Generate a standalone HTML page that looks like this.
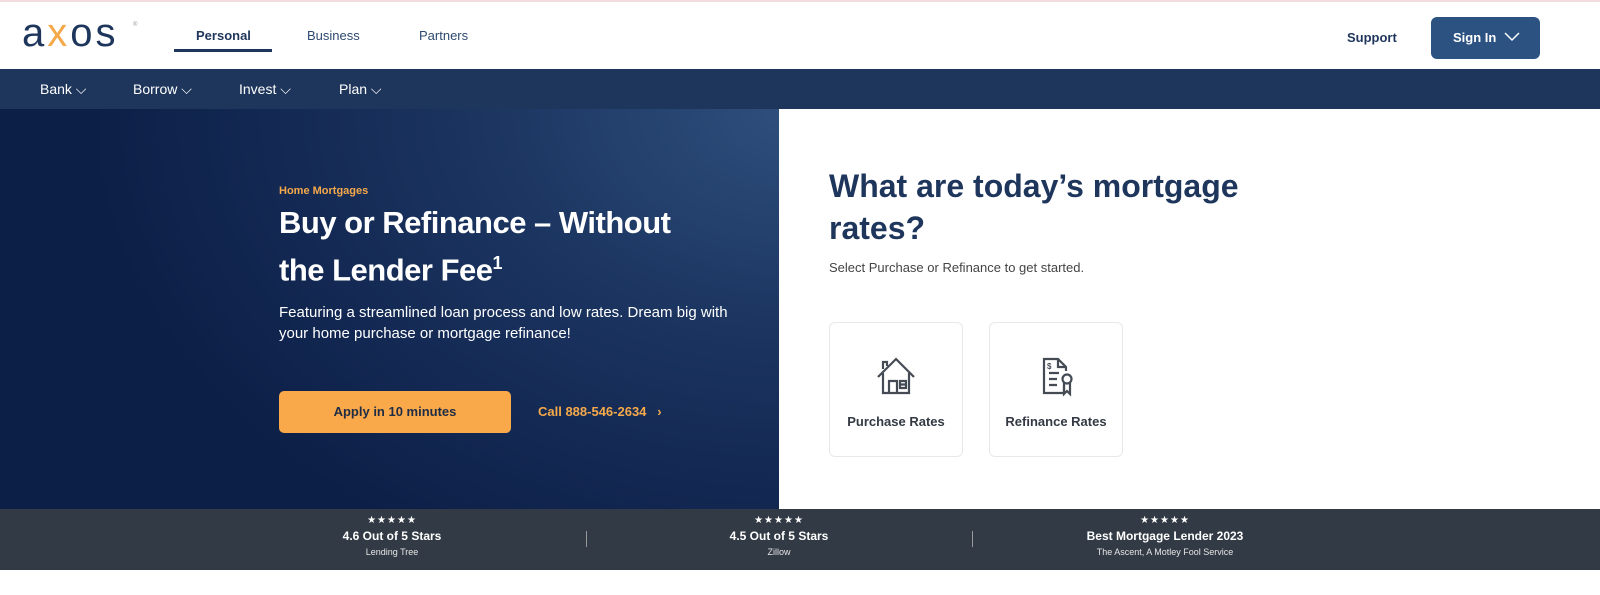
<!DOCTYPE html>
<html><head><style>
*{margin:0;padding:0;box-sizing:border-box}
body{width:1600px;height:595px;overflow:hidden;background:#fff;font-family:"Liberation Sans",sans-serif;position:relative}
.abs{position:absolute}
.top{position:absolute;top:0;left:0;width:1600px;height:2px;background:#f3dde0}
.nav2{position:absolute;top:69px;left:0;width:1600px;height:40px;background:#1f365c;color:#fff;font-size:14px}
.nav2 span{position:absolute;top:12px}
.hero{position:absolute;top:109px;left:0;width:779px;height:400px;background:radial-gradient(ellipse 700px 500px at 790px 0px,#2f4f7c 0%,#1b3460 45%,#0c1f47 100%)}
.band{position:absolute;top:509px;left:0;width:1600px;height:61px;background:#323b45;color:#fff;text-align:center}
.col{position:absolute;top:6px;width:300px}
.col .s{font-size:10px;letter-spacing:1px}
.col .t{font-size:12px;font-weight:bold;margin-top:3px}
.col .u{font-size:9px;margin-top:4px;color:#e6e6e6}
.card{position:absolute;top:322px;width:134px;height:135px;border:1px solid #e6e8eb;border-radius:6px;text-align:center;font-size:13px;font-weight:bold;color:#333a44}
</style></head><body>
<div class="top"></div>
<div class="abs" style="left:22px;top:13px;font-size:40px;color:#1f365c;letter-spacing:3px;line-height:40px">a<span style="color:#f5a94a">x</span>os</div>
<div class="abs" style="left:133px;top:22px;font-size:6px;color:#999">®</div>
<div class="abs" style="left:196px;top:28px;font-size:13px;font-weight:bold;color:#1f365c">Personal</div>
<div class="abs" style="left:174px;top:49px;width:98px;height:3px;background:#1f365c"></div>
<div class="abs" style="left:307px;top:28px;font-size:13px;color:#2d4a70">Business</div>
<div class="abs" style="left:419px;top:28px;font-size:13px;color:#2d4a70">Partners</div>
<div class="abs" style="left:1347px;top:30px;font-size:13px;font-weight:bold;color:#1f365c">Support</div>
<div class="abs" style="left:1431px;top:17px;width:109px;height:42px;background:#2c5282;border-radius:6px;color:#fff;font-size:13px;font-weight:bold;padding:13px 0 0 22px">Sign In <svg width="16" height="10" style="margin-left:4px" viewBox="0 0 16 10"><path d="M1 1l7 7 7-7" stroke="#fff" stroke-width="1.5" fill="none"/></svg></div>
<div class="nav2">
<span style="left:40px">Bank ⌵</span><span style="left:133px">Borrow ⌵</span><span style="left:239px">Invest ⌵</span><span style="left:339px">Plan ⌵</span>
</div>
<div class="hero">
<div class="abs" style="left:279px;top:76px;font-size:11px;font-weight:bold;color:#f5a94a">Home Mortgages</div>
<div class="abs" style="left:279px;top:94px;font-size:31px;font-weight:bold;color:#fff;line-height:40px;width:440px;letter-spacing:-0.5px">Buy or Refinance – Without the Lender Fee<sup style="font-size:18px">1</sup></div>
<div class="abs" style="left:279px;top:193px;font-size:15px;color:#fff;line-height:21px;width:480px">Featuring a streamlined loan process and low rates. Dream big with your home purchase or mortgage refinance!</div>
<div class="abs" style="left:279px;top:282px;width:232px;height:42px;background:#f9a84a;border-radius:5px;text-align:center;font-size:13px;font-weight:bold;color:#1f2d44;line-height:42px">Apply in 10 minutes</div>
<div class="abs" style="left:538px;top:295px;font-size:13px;font-weight:bold;color:#f5a94a">Call 888-546-2634 &nbsp;&nbsp;›</div>
</div>
<div class="abs" style="left:829px;top:165px;font-size:32px;font-weight:bold;color:#1f365c;line-height:42px;width:460px">What are today’s mortgage rates?</div>
<div class="abs" style="left:829px;top:260px;font-size:13px;color:#444">Select Purchase or Refinance to get started.</div>
<div class="card" style="left:829px"><svg width="44" height="44" viewBox="0 0 44 44" style="margin-top:32px" fill="none" stroke="#444b55" stroke-width="2.2"><path d="M4 22L22 4l18 18M9 18v20h26V18M9 14V7h4v4M15 38V26h8v12M26 26h6v7h-6zM26 29.5h6"/></svg><div style="margin-top:12px">Purchase Rates</div></div>
<div class="card" style="left:989px"><svg width="44" height="44" viewBox="0 0 44 44" style="margin-top:32px" fill="none" stroke="#444b55" stroke-width="2.2"><path d="M30 30v8H10V4h14l8 8v4M24 4v8h8M15 18h10M15 24h8M15 30h8"/><circle cx="33" cy="24" r="4.5"/><path d="M30 28v11l3-3 3 3V28"/><text x="13" y="14" font-size="8" fill="#444b55" stroke="none">$</text></svg><div style="margin-top:12px">Refinance Rates</div></div>
<div class="band">
<div class="col" style="left:242px"><div class="s">★★★★★</div><div class="t">4.6 Out of 5 Stars</div><div class="u">Lending Tree</div></div>
<div class="abs" style="left:586px;top:22px;width:1px;height:16px;background:#999"></div>
<div class="col" style="left:629px"><div class="s">★★★★★</div><div class="t">4.5 Out of 5 Stars</div><div class="u">Zillow</div></div>
<div class="abs" style="left:972px;top:22px;width:1px;height:16px;background:#999"></div>
<div class="col" style="left:1015px"><div class="s">★★★★★</div><div class="t">Best Mortgage Lender 2023</div><div class="u">The Ascent, A Motley Fool Service</div></div>
</div>
</body></html>
